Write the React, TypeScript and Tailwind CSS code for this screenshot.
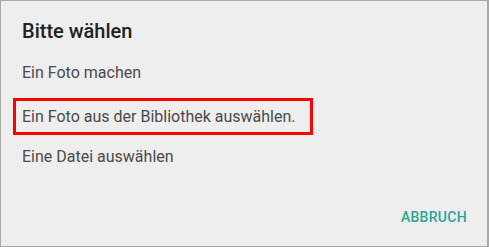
export default function App() {
  return (
    <div className="w-[489px] h-[247px] bg-[#eeeeee] border-t border-l border-b border-r-2 border-[#a8a8a8] font-['Roboto',sans-serif] flex flex-col">
      <h2 className="pl-[21px] pt-[17px] text-[20px] leading-[26px] font-medium text-[#212121]">
        Bitte wählen
      </h2>
      <div className="flex flex-col mt-[8px] text-[16px] text-[#4a4a4a]">
        <div className="h-[41px] flex items-center pl-[21px]">Ein Foto machen</div>
        <div className="mt-[5px] ml-[12px] w-[300px] h-[37px] border-[3px] border-[#ff0000] flex items-center pl-[6px]">
          Ein Foto aus der Bibliothek auswählen.
        </div>
        <div className="h-[44px] flex items-center pl-[21px]">Eine Datei auswählen</div>
      </div>
      <div className="mt-auto flex justify-end pr-[20px] pb-[19px]">
        <button className="text-[14px] leading-[20px] font-medium tracking-[0.3px] text-[#2aa597]">
          ABBRUCH
        </button>
      </div>
    </div>
  )
}
